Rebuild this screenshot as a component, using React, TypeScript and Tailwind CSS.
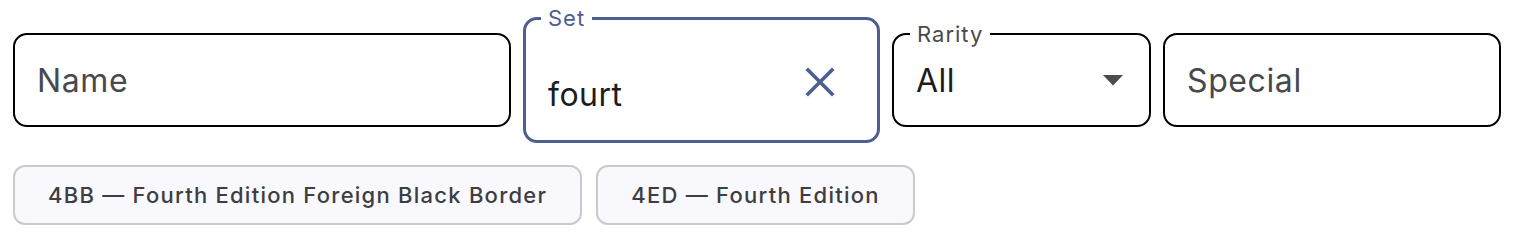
import React from "react";

function Field({
  label,
  value,
  placeholder,
  className,
  focused,
  children,
}: {
  label?: string;
  value?: string;
  placeholder?: string;
  className?: string;
  focused?: boolean;
  children?: React.ReactNode;
}) {
  return (
    <div
      className={
        "relative flex items-center rounded-[14px] px-[22px] min-w-0 " +
        (focused
          ? "border-[3px] border-[#4d5e91] h-[126px] "
          : "border-2 border-black h-[94px] ") +
        (className ?? "")
      }
    >
      {label ? (
        <span
          className={
            "absolute px-[7px] text-[22px] leading-[24px] tracking-[1px] bg-white " +
            (focused ? "left-[15px] top-[-14px] text-[#4d5e91]" : "left-[16px] top-[-13px] text-[#4a4a4f]")
          }
        >
          {label}
        </span>
      ) : null}
      {value ? (
        <span className={"text-[32px] tracking-[0.5px] text-[#1c1c1e] " + (focused ? "mt-[30px]" : "mt-[2px]")}>{value}</span>
      ) : (
        <span className="text-[32px] tracking-[0.6px] text-[#48484d] mt-[2px]">{placeholder}</span>
      )}
      <div className="flex-1" />
      {children}
    </div>
  );
}

export default function App() {
  return (
    <div className="bg-white w-[1514px] h-[238px] px-[13px] pt-[17px]" style={{ fontFamily: "Inter, 'Noto Sans', sans-serif" }}>
      <div className="flex items-center gap-[12px]">
        <Field placeholder="Name" className="w-[498px]" />
        <Field label="Set" value="fourt" focused className="w-[357px] pr-[42px]">
          <svg width="30" height="30" viewBox="0 0 30 30" className="mt-[4px]">
            <path d="M3 3 L27 27 M27 3 L3 27" stroke="#4d5e91" strokeWidth="3.6" strokeLinecap="square" />
          </svg>
        </Field>
        <Field label="Rarity" value="All" className="w-[259px] pr-[26px]">
          <svg width="20" height="11" viewBox="0 0 20 11">
            <path d="M0 0 L20 0 L10 10.5 Z" fill="#4a4a4f" />
          </svg>
        </Field>
        <Field placeholder="Special" className="w-[338px]" />
      </div>
      <div className="flex gap-[14px] mt-[22px]">
        <div className="h-[60px] px-[33px] flex items-center rounded-[12px] border-2 border-[#c9c9ce] bg-[#f8f8fd] text-[22px] tracking-[1.25px] font-medium text-[#3d3d42]">
          4BB — Fourth Edition Foreign Black Border
        </div>
        <div className="h-[60px] px-[33px] flex items-center rounded-[12px] border-2 border-[#c9c9ce] bg-[#f8f8fd] text-[22px] tracking-[1.25px] font-medium text-[#3d3d42]">
          4ED — Fourth Edition
        </div>
      </div>
    </div>
  );
}
